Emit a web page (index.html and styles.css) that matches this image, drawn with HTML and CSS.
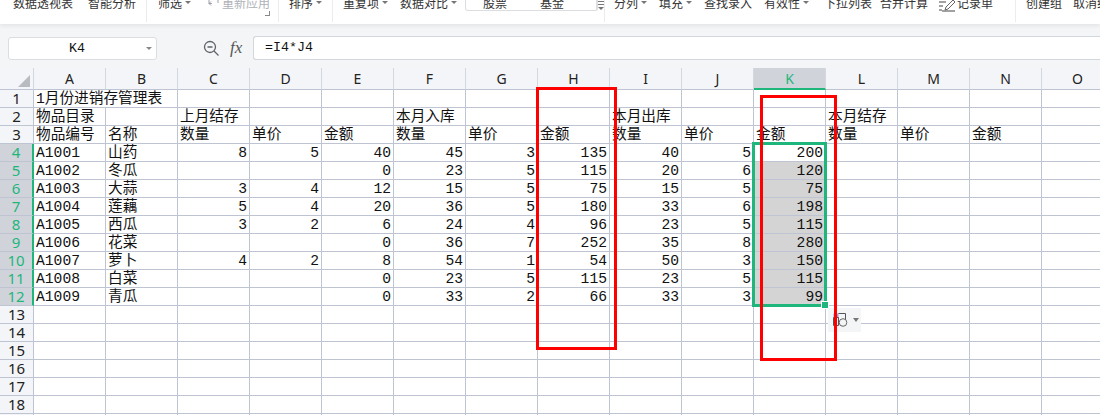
FILE: index.html
```html
<!DOCTYPE html>
<html lang="zh-CN">
<head>
<meta charset="utf-8">
<title>1月份进销存管理表</title>
<link rel="stylesheet" href="styles.css">
</head>
<body>
<div class="toolbar">
  <div class="tb-row">
    <div class="tb-group g1"><span>数据透视表</span><span>智能分析</span></div>
    <div class="tb-group g2"><span class="caret">筛选</span>
      <span class="muted reapply"><svg width="14" height="12" viewBox="0 0 14 12"><path d="M3 0v5.500h3M3 5.500l2 2M3 5.500l2-2M5 1h7v4" fill="none" stroke="#9ea2a8"/></svg>重新应用</span>
      <i class="corner"></i>
    </div>
    <div class="tb-group g3"><span class="caret">排序</span></div>
    <div class="tb-group g4"><span class="caret">重复项</span><span class="caret">数据对比</span>
      <div class="typebox"><span>股票</span><span>基金</span><b class="spin"><svg width="8" height="12" viewBox="0 0 8 12"><path d="M1 1.500h6M1 4.500h6" stroke="#777"/><path d="M1 7h6L4 10z" fill="#777"/></svg></b></div>
    </div>
    <div class="tb-group g5"><span class="caret">分列</span><span class="caret">填充</span><span>查找录入</span><span class="caret wide">有效性</span><span class="tight">下拉列表</span><span>合并计算</span>
      <span class="record"><svg width="19" height="14" viewBox="0 0 19 14"><path d="M1 4h7M1 8h4M1 12h3" fill="none" stroke="#444"/><path d="M7 12l1-3 7-7 2 2-7 7z" fill="none" stroke="#666"/><path d="M4 13h13" stroke="#444"/></svg>记录单</span></div>
    <div class="tb-group g6"><span>创建组</span><span>取消组合</span></div>
  </div>
</div>
<div class="band"></div>
<div class="formula-row">
  <div class="namebox"><span class="namebox-text">K4</span><i class="name-caret"></i></div>
  <div class="fx-tools">
    <svg class="zoom-icon" width="17" height="17" viewBox="0 0 17 17"><circle cx="7" cy="7" r="5.500" fill="none" stroke="#5f6368" stroke-width="1.300"/><path d="M4.500 7h5M11 11l4.500 4.500" stroke="#5f6368" stroke-width="1.300"/></svg>
    <span class="fx">fx</span>
  </div>
  <div class="formula">=I4*J4</div>
</div>
<div class="sheet">
  <table class="grid">
    <colgroup><col class="c-head"><col class="c"><col class="c"><col class="c"><col class="c"><col class="c"><col class="c"><col class="c"><col class="c"><col class="c"><col class="c"><col class="c"><col class="c"><col class="c"><col class="c"><col class="c"></colgroup>
    <tr class="hdr"><th class="corner-cell"><svg width="12" height="12" viewBox="0 0 12 12"><path d="M12 0v12H0z" fill="#b8bbc0"/></svg></th><th>A</th><th>B</th><th>C</th><th>D</th><th>E</th><th>F</th><th>G</th><th>H</th><th>I</th><th>J</th><th class="sel-col">K</th><th>L</th><th>M</th><th>N</th><th>O</th></tr>
    <tr><th>1</th><td colspan="2">1月份进销存管理表</td><td></td><td></td><td></td><td></td><td></td><td></td><td></td><td></td><td></td><td></td><td></td><td></td><td></td></tr>
    <tr><th>2</th><td>物品目录</td><td></td><td>上月结存</td><td></td><td></td><td>本月入库</td><td></td><td></td><td>本月出库</td><td></td><td></td><td>本月结存</td><td></td><td></td><td></td></tr>
    <tr><th>3</th><td>物品编号</td><td>名称</td><td>数量</td><td>单价</td><td>金额</td><td>数量</td><td>单价</td><td>金额</td><td>数量</td><td>单价</td><td>金额</td><td>数量</td><td>单价</td><td>金额</td><td></td></tr>
    <tr class="sel"><th>4</th><td>A1001</td><td>山药</td><td class="n">8</td><td class="n">5</td><td class="n">40</td><td class="n">45</td><td class="n">3</td><td class="n">135</td><td class="n">40</td><td class="n">5</td><td class="n active">200</td><td></td><td></td><td></td><td></td></tr>
    <tr class="sel"><th>5</th><td>A1002</td><td>冬瓜</td><td class="n"></td><td class="n"></td><td class="n">0</td><td class="n">23</td><td class="n">5</td><td class="n">115</td><td class="n">20</td><td class="n">6</td><td class="n fill">120</td><td></td><td></td><td></td><td></td></tr>
    <tr class="sel"><th>6</th><td>A1003</td><td>大蒜</td><td class="n">3</td><td class="n">4</td><td class="n">12</td><td class="n">15</td><td class="n">5</td><td class="n">75</td><td class="n">15</td><td class="n">5</td><td class="n fill">75</td><td></td><td></td><td></td><td></td></tr>
    <tr class="sel"><th>7</th><td>A1004</td><td>莲藕</td><td class="n">5</td><td class="n">4</td><td class="n">20</td><td class="n">36</td><td class="n">5</td><td class="n">180</td><td class="n">33</td><td class="n">6</td><td class="n fill">198</td><td></td><td></td><td></td><td></td></tr>
    <tr class="sel"><th>8</th><td>A1005</td><td>西瓜</td><td class="n">3</td><td class="n">2</td><td class="n">6</td><td class="n">24</td><td class="n">4</td><td class="n">96</td><td class="n">23</td><td class="n">5</td><td class="n fill">115</td><td></td><td></td><td></td><td></td></tr>
    <tr class="sel"><th>9</th><td>A1006</td><td>花菜</td><td class="n"></td><td class="n"></td><td class="n">0</td><td class="n">36</td><td class="n">7</td><td class="n">252</td><td class="n">35</td><td class="n">8</td><td class="n fill">280</td><td></td><td></td><td></td><td></td></tr>
    <tr class="sel"><th>10</th><td>A1007</td><td>萝卜</td><td class="n">4</td><td class="n">2</td><td class="n">8</td><td class="n">54</td><td class="n">1</td><td class="n">54</td><td class="n">50</td><td class="n">3</td><td class="n fill">150</td><td></td><td></td><td></td><td></td></tr>
    <tr class="sel"><th>11</th><td>A1008</td><td>白菜</td><td class="n"></td><td class="n"></td><td class="n">0</td><td class="n">23</td><td class="n">5</td><td class="n">115</td><td class="n">23</td><td class="n">5</td><td class="n fill">115</td><td></td><td></td><td></td><td></td></tr>
    <tr class="sel"><th>12</th><td>A1009</td><td>青瓜</td><td class="n"></td><td class="n"></td><td class="n">0</td><td class="n">33</td><td class="n">2</td><td class="n">66</td><td class="n">33</td><td class="n">3</td><td class="n fill">99</td><td></td><td></td><td></td><td></td></tr>
    <tr><th>13</th><td></td><td></td><td></td><td></td><td></td><td></td><td></td><td></td><td></td><td></td><td></td><td></td><td></td><td></td><td></td></tr>
    <tr><th>14</th><td></td><td></td><td></td><td></td><td></td><td></td><td></td><td></td><td></td><td></td><td></td><td></td><td></td><td></td><td></td></tr>
    <tr><th>15</th><td></td><td></td><td></td><td></td><td></td><td></td><td></td><td></td><td></td><td></td><td></td><td></td><td></td><td></td><td></td></tr>
    <tr><th>16</th><td></td><td></td><td></td><td></td><td></td><td></td><td></td><td></td><td></td><td></td><td></td><td></td><td></td><td></td><td></td></tr>
    <tr><th>17</th><td></td><td></td><td></td><td></td><td></td><td></td><td></td><td></td><td></td><td></td><td></td><td></td><td></td><td></td><td></td></tr>
    <tr><th>18</th><td></td><td></td><td></td><td></td><td></td><td></td><td></td><td></td><td></td><td></td><td></td><td></td><td></td><td></td><td></td></tr>
    <tr><th></th><td></td><td></td><td></td><td></td><td></td><td></td><td></td><td></td><td></td><td></td><td></td><td></td><td></td><td></td><td></td></tr>
  </table>
  <div class="selection"><i class="handle"></i></div>
  <div class="paste-tag"><svg width="15" height="14" viewBox="0 0 15 14"><path d="M.5.500h5v4h-5z" fill="#7fa7e8"/><path d="M.5 4.500h5v8h-5zM5.500.500h7v7" fill="none" stroke="#555"/><circle cx="10" cy="9.500" r="3.800" fill="#f4f5f7" stroke="#666"/></svg><i class="paste-caret"></i></div>
  <div class="red-box box-h"></div>
  <div class="red-box box-k"></div>
</div>
</body>
</html>
```
FILE: styles.css
```css
* { box-sizing: border-box; }
html, body { margin: 0; height: 415px; overflow: hidden; background: #f4f5f7; }
body { font-family: "Noto Sans CJK SC", "Liberation Sans", sans-serif; color: #111; }

.toolbar { position: relative; height: 24px; background: #fff; overflow: hidden; box-shadow: 0 2px 4px rgba(0,0,0,.07); z-index: 1; }
.tb-row { display: flex; height: 27px; margin-top: -5px; font-size: 12px; color: #333; }
.tb-group { flex: none; position: relative; display: flex; align-items: flex-start; height: 27px; border-right: 1px solid #ececee; line-height: 16px; white-space: nowrap; }
.g1 { width: 147px; padding-left: 13px; gap: 15px; }
.g2 { width: 132px; padding-left: 11px; gap: 15px; }
.g3 { width: 54px; padding-left: 10px; }
.g4 { width: 272px; padding-left: 10px; gap: 12px; }
.g5 { width: 411px; padding-left: 9px; gap: 12px; }
.g6 { border-right: 0; padding-left: 10px; gap: 11px; }
.caret::after { content: ""; display: inline-block; margin: 0 0 5px 3px; border: 3px solid transparent; border-top: 3px solid #777; border-bottom: 0; vertical-align: middle; }
.muted { color: #aeb1b6; }
.reapply { display: flex; gap: 2px; }
.reapply svg { margin-top: 3px; }
.corner { position: absolute; left: 118px; top: 16px; width: 5px; height: 5px; border-right: 1px solid #888; border-bottom: 1px solid #888; }
.typebox { display: flex; width: 133px; height: 16px; margin-left: -4px; padding-left: 17px; gap: 33px; background: #fff; border: 1px solid #dcdde0; border-top: 0; border-radius: 0 0 3px 3px; }
.spin { display: flex; justify-content: center; width: 12px; margin-left: -1px; height: 15px; border-left: 1px solid #dcdde0; padding-top: 5px; }
.tight { margin-right: -4px; }
.wide { margin-right: 3px; }
.record { display: flex; margin-left: -2px; }
.record svg { margin-top: 3px; }

.band { height: 12px; }

.formula-row { display: flex; height: 24px; }
.namebox { display: flex; align-items: center; justify-content: space-between; width: 149px; height: 23px; margin: 1px 0 0 8px; padding-left: 60px; padding-right: 4px; background: #fff; border: 1px solid #dcdde0; border-radius: 3px; font: 13.300px "Liberation Mono", monospace; }
.namebox-text { line-height: 20px; }
.name-caret { border: 3px solid transparent; border-top: 3px solid #888; border-bottom: 0; }
.fx-tools { display: flex; align-items: center; width: 96px; padding-left: 46px; gap: 10px; }
.fx { font: italic 17px "Liberation Serif", serif; color: #555; }
.formula { flex: 1; height: 24px; padding-left: 11px; background: #fff; border: 1px solid #d3d6dc; border-right: 0; border-radius: 3px 0 0 3px; font: 13.300px/22px "Liberation Mono", monospace; }

.sheet { position: relative; margin-top: 8px; height: 347px; overflow: hidden; background: #fff; }
.grid { border-collapse: separate; border-spacing: 0; table-layout: fixed; width: 1114px; }
.c-head { width: 34px; }
.c { width: 72px; }
.grid tr { height: 18px; }
.grid tr.hdr { height: 22px; }
.grid th, .grid td { height: 18px; padding: 0; overflow: hidden; white-space: nowrap; }
.grid th { font: 400 15px/17px "Noto Sans", "Liberation Sans", sans-serif; color: #222; background: #f4f5f8; border-right: 1px solid #bfc4d2; border-bottom: 1px solid #bfc4d2; text-align: center; }
.grid tr.hdr th { height: 22px; font-size: 14px; border-right-color: #d5d8e0; border-bottom: 1px solid #bfc4d2; }
.corner-cell svg { display: block; margin: 5px 0 0 18px; }
.grid td { padding: 2px 2px 0; font: 14.670px/15px "Liberation Mono", "Noto Sans CJK SC", monospace; color: #111; border-right: 1px solid #bfc4d2; border-bottom: 1px solid #bfc4d2; vertical-align: top; background: #fff; }
.grid td.n { text-align: right; }
.grid td.fill { background: #d4d4d4; }
.grid tr.sel th { background: #d0d3da; color: #1fb67c; border-right: 2px solid #1fb67c; }
.grid tr.hdr th.sel-col { background: #d0d3da; color: #1fb67c; border-bottom: 2px solid #1fb67c; }

.selection { position: absolute; left: 752px; top: 74px; width: 75px; height: 165px; border: 3px solid #1fb67c; }
.handle { position: absolute; right: -5px; bottom: -5px; width: 6px; height: 6px; background: #1fb67c; border: 1px solid #fff; box-sizing: content-box; }
.paste-tag { position: absolute; left: 828px; top: 240px; display: flex; align-items: center; gap: 5px; width: 33px; height: 24px; padding-left: 5px; background: #f4f5f7; }
.paste-caret { border: 3px solid transparent; border-top: 4px solid #777; border-bottom: 0; }
.red-box { position: absolute; border: 3px solid #f00; }
.box-h { left: 536px; top: 19px; width: 81px; height: 263px; }
.box-k { left: 760px; top: 27px; width: 77px; height: 266px; }
```
